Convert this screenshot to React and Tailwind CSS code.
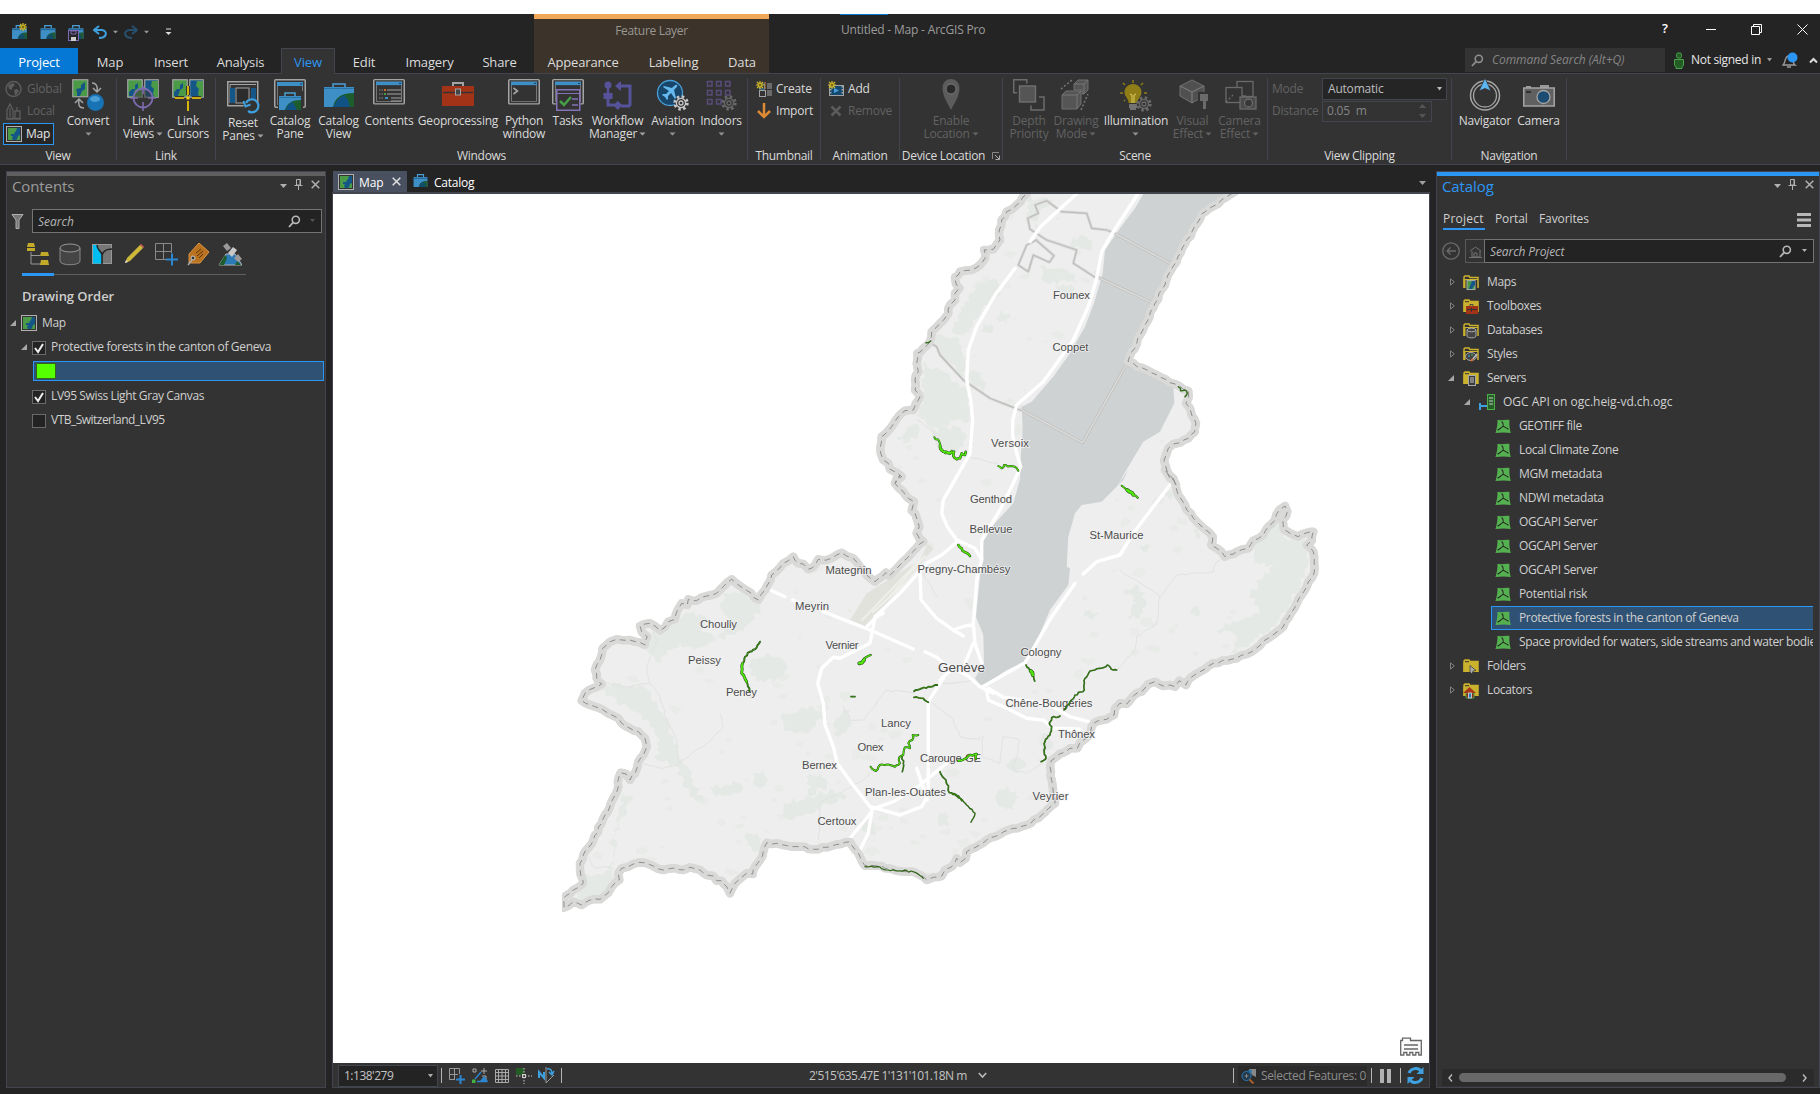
import React from "react";

/* ---------- shared pieces ---------- */

const I = ({ w = 16, h, vb, className = "", children }) => (
  <svg width={w} height={h || w} viewBox={vb || `0 0 ${w} ${h || w}`} fill="none" className={`shrink-0 ${className}`}>
    {children}
  </svg>
);

const Caret = ({ c = "#a0a0a0", className = "" }) => (
  <I w={7} h={4} className={className}><path d="M0 0h7L3.5 4z" fill={c} /></I>
);

const MapTile = ({ w = 16 }) => (
  <I w={w} vb="0 0 16 16">
    <rect x=".5" y=".5" width="15" height="15" fill="#333" stroke="#b0b0b0" />
    <rect x="2" y="2" width="12" height="12" fill="#4b9a48" />
    <path d="M11 2h3v7l-2 1-1 3-1 1H7l-1-2 1-2H5V8l3 0 1-2 1-1z" fill="#155688" />
  </I>
);

const Briefcase = ({ w = 16, h = 15 }) => (
  <I w={w} h={h} vb="0 0 16 15">
    <path d="M4.500 3.500V.7h7v2.800" stroke="#4a9fd8" strokeWidth="1.300" />
    <rect x="0" y="3.500" width="16" height="11.500" fill="#3d8fc6" />
    <path d="M6 15c1-5 4-7 10-7v7z" fill="#1f5a35" />
    <path d="M8 11l3-2 2 2 1 4H6z" fill="#0d4b7b" opacity=".8" />
    <path d="M0 5h16" stroke="#1f5f8f" />
  </I>
);

const Search = ({ c = "#b8b8b8" }) => (
  <I w={13}><circle cx="7.8" cy="4.8" r="3.6" stroke={c} strokeWidth="1.6" /><path d="M5 7.6L1 12" stroke={c} strokeWidth="1.8" /></I>
);

const Gear = ({ x, y, c, bg = "#333" }) => (
  <g transform={`translate(${x} ${y})`}>
    <circle r="6.2" stroke={c} strokeWidth="3" strokeDasharray="2.4 2.47" fill={bg} />
    <circle r="4.6" fill={bg} stroke={c} strokeWidth="1.3" />
    <circle r="2" stroke={c} strokeWidth="1.3" />
  </g>
);

const Spark = ({ x, y, c = "#d6bd2c" }) => (
  <g transform={`translate(${x} ${y})`} stroke={c}>
    <path d="M0-4V4M-4 0H4M-3-3L3 3M-3 3L3-3" strokeWidth="1.2" />
    <circle r="2" fill="#7a6b10" />
  </g>
);

/* ---------- quick access ---------- */

function QuickAccess() {
  return (
    <div className="flex h-[34px] items-center pl-[12px] pt-[2px]">
      <div className="relative">
        <Briefcase w={15} h={14} />
        <I w={10} className="absolute -top-[3px] left-[6px]"><Spark x={5} y={5} /></I>
      </div>
      <div className="ml-[13px]"><Briefcase w={16} h={14} /></div>
      <div className="relative ml-[12px]">
        <Briefcase w={16} h={14} />
        <I w={11} className="absolute left-0 top-[5px]">
          <rect x=".5" y=".5" width="10" height="10" fill="#252525" stroke="#7e6bb5" />
          <path d="M3 1h5v3H3z" stroke="#7e6bb5" /><path d="M3 7h5v4H3z" fill="#ccc" />
        </I>
      </div>
      <I w={14} h={14} className="ml-[9px]"><path d="M6 1L1 5l5 4M1 5h8c6 1 5 8-3 8" stroke="#3fa0e0" strokeWidth="2" /></I>
      <Caret className="ml-[5px] scale-75" c="#9a9a9a" />
      <I w={14} h={14} className="ml-[5px]"><path d="M8 1l5 4-5 4M13 5H5C-1 6 0 13 8 13" stroke="#27506e" strokeWidth="2" /></I>
      <Caret className="ml-[5px] scale-75" c="#9a9a9a" />
      <I w={7} h={8} className="ml-[15px]"><path d="M1 1h5" stroke="#ddd" /><path d="M.5 4h6L3.500 7z" fill="#ddd" /></I>
    </div>
  );
}

const Tab = ({ className = "", children }) => (
  <div className={`flex h-full items-center justify-center pt-[3px] text-[13px] tracking-[-0.15px] text-[#dcdcdc] ${className}`}>{children}</div>
);

function Header() {
  return (
    <header className="flex h-[60px] border-b border-[#43454e] bg-[#242424]">
      <div className="w-[534px]">
        <QuickAccess />
        <nav className="flex h-[26px]">
          <Tab className="w-[78px] bg-[#0478d4] !text-white">Project</Tab>
          <Tab className="w-[64px]">Map</Tab>
          <Tab className="w-[58px]">Insert</Tab>
          <Tab className="w-[81px]">Analysis</Tab>
          <Tab className="w-[54px] border border-b-0 border-[#43454e] bg-[#333] !text-[#2c96f5]">View</Tab>
          <Tab className="w-[58px]">Edit</Tab>
          <Tab className="w-[73px]">Imagery</Tab>
          <Tab className="w-[67px]">Share</Tab>
        </nav>
      </div>
      <div className="w-[235px] border-t-[5px] border-[#f0a757] bg-[#3c332a]">
        <div className="flex h-[29px] items-center justify-center pb-[5px] text-[12px] tracking-[-0.3px] text-[#9b9792]">Feature Layer</div>
        <div className="flex h-[25px] pt-px">
          <Tab className="w-[98px]">Appearance</Tab>
          <Tab className="w-[83px]">Labeling</Tab>
          <Tab className="w-[54px]">Data</Tab>
        </div>
      </div>
      <div className="flex-1">
        <div className="flex h-[34px] items-center">
          <div className="flex h-full w-[192px] flex-col pl-[72px]">
            <div className="-ml-px h-px w-[48px] bg-[#0478d4]" />
            <div className="mt-[6px] whitespace-nowrap text-[12px] leading-[18px] tracking-[-0.18px] text-[#9c9c9c]">Untitled - Map - ArcGIS Pro</div>
          </div>
          <div className="ml-auto flex items-center pb-[4px] pr-[12px] text-white">
            <span className="w-[14px] text-center text-[13px] font-semibold">?</span>
            <I w={10} className="ml-[34px]"><path d="M0 5.500h10" stroke="#fff" /></I>
            <I w={11} className="ml-[35px]"><path d="M.5 2.500h8v8h-8zM2.500 2.500v-2h8v8h-2" stroke="#fff" /></I>
            <I w={11} className="ml-[35px]"><path d="M.5.5l10 10M10.500.5l-10 10" stroke="#fff" /></I>
          </div>
        </div>
        <div className="flex h-[24px] items-center pl-[696px]">
          <div className="flex h-full w-[200px] items-center gap-[8px] bg-[#333] pl-[6px]">
            <Search c="#8f8f8f" />
            <span className="text-[12px] italic tracking-[-0.05px] text-[#858585]">Command Search (Alt+Q)</span>
          </div>
          <I w={10} h={17} className="ml-[9px]">
            <rect x="2.500" y="1" width="5" height="5" rx="1.500" fill="#235c24" stroke="#4aa34a" />
            <path d="M.5 7.500h9v6l-1.500 1v2H2v-2l-1.500-1z" fill="#235c24" stroke="#4aa34a" />
          </I>
          <span className="ml-[7px] w-[72px] whitespace-nowrap text-[12px] tracking-[-0.3px] text-[#e6e6e6]">Not signed in</span>
          <I w={5} h={4} className="ml-[4px]"><path d="M0 0h5L2.500 3.500z" fill="#999" /></I>
          <I w={16} h={17} className="ml-[10px]">
            <path d="M1 13c3-2 1-9 6-9s3 7 6 9z" stroke="#9a9a9a" strokeWidth="1.300" /><path d="M5 15h4" stroke="#9a9a9a" strokeWidth="1.500" />
            <circle cx="10.500" cy="5.500" r="5" fill="#2c96f5" />
          </I>
          <I w={9} h={7} className="ml-[11px]"><path d="M1 5.500L4.500 2 8 5.500" stroke="#ddd" strokeWidth="2" /></I>
        </div>
      </div>
    </header>
  );
}

/* ---------- ribbon ---------- */

const G = "#a4a4a4";
const D = "#5c5c5c";

const WindowFrame = () => (
  <>
    <rect x=".75" y=".75" width="30.500" height="27.500" stroke={G} strokeWidth="1.500" rx="1" />
    <rect x="3.500" y="3.500" width="25" height="22" stroke="#777" />
    <rect x="3" y="3" width="26" height="4" fill="#3d8fc6" /><path d="M26 5h2" stroke="#173d58" />
  </>
);

const TwoMaps = () => (
  <>
    <g><rect x=".75" y=".75" width="14.500" height="17.500" fill="#4b9a48" stroke={G} strokeWidth="1.200" /><path d="M2 17V13l3-3 3 0 0-4 3-2 0 5-3 2-2 6z" fill="#155688" /></g>
    <g><rect x="17.750" y=".75" width="13.500" height="17.500" fill="#155688" stroke={G} strokeWidth="1.200" /><path d="M25 2h6v16h-4l-1-4 1-4-3-3z" fill="#4b9a48" /></g>
  </>
);

const icons = {
  convert: (
    <>
      <rect x=".75" y=".75" width="15" height="17" fill="#4b9a48" stroke={G} strokeWidth="1.200" />
      <path d="M5 17V13l-1-3 5-1V6l4-3v7l-3 2-2 5z" fill="#155688" />
      <path d="M20 4c4 0 6 3 5 8M21 9l4 4 4-4" stroke={G} strokeWidth="1.500" />
      <path d="M12 29c-5 0-6-3-5-8M3 24l4-4 4 4" stroke={G} strokeWidth="1.500" />
      <circle cx="23.500" cy="23.500" r="8.500" fill="#1873b4" /><ellipse cx="23" cy="20" rx="5" ry="3" fill="#58a9de" opacity=".8" />
    </>
  ),
  linkViews: (
    <>
      <TwoMaps />
      <circle cx="16" cy="19" r="9.500" stroke="#7d6bb0" strokeWidth="1.800" fill="#333" fillOpacity=".55" />
      <path d="M16 7v8M16 23v9M3 19h8M21 19h8" stroke="#7d6bb0" strokeWidth="1.600" />
    </>
  ),
  linkCursors: (
    <>
      <TwoMaps />
      <path d="M16 7v9M16 22v10M3 19h9M20 19h9" stroke="#333" strokeWidth="4" />
      <path d="M16 7v9M16 22v10M3 19h9M20 19h9" stroke="#ffd500" strokeWidth="1.600" /><rect x="14.500" y="17.500" width="3" height="3" fill="#ffd500" />
    </>
  ),
  resetPanes: (
    <>
      <rect x=".75" y=".75" width="30" height="24" stroke={G} strokeWidth="1.500" />
      <path d="M3 3.500h26M3 3v19" stroke={G} />
      <rect x="3" y="7" width="5" height="15" fill="#155688" /><rect x="9" y="7" width="13" height="15" fill="#2c2c2c" stroke={G} />
      <rect x="24" y="7" width="5" height="12" fill="#155688" />
      <circle cx="24" cy="25" r="7.500" fill="#333" />
      <path d="M19 22a6.500 6.500 0 1 1 2 8" stroke="#3fa0e0" strokeWidth="2.200" /><path d="M16.500 20l2 5.500 5-2" stroke="#3fa0e0" strokeWidth="2" />
    </>
  ),
  catalogPane: (
    <>
      <WindowFrame />
      <rect x="4" y="12" width="25" height="20" fill="#333" />
      <path d="M11 17v-3h10v3" stroke="#4a9fd8" strokeWidth="1.500" />
      <rect x="5" y="17" width="22" height="14" fill="#3d8fc6" /><path d="M5 18.500h22" stroke="#2a74a5" />
      <path d="M11 31c2-7 7-10 16-10v10z" fill="#1d5c2c" /><path d="M15 25l4-2 2 4 2 4H11z" fill="#0f5283" />
    </>
  ),
  catalogView: (
    <>
      <path d="M10 8V5h12v3" stroke="#4a9fd8" strokeWidth="1.500" />
      <rect x="1" y="8" width="30" height="20" fill="#3d8fc6" /><path d="M1 9.500h30" stroke="#2a74a5" />
      <path d="M10 28c2-10 9-14 21-14v14z" fill="#1d5c2c" /><path d="M15 20l6-4 4 5 2 7H10z" fill="#0f5283" />
    </>
  ),
  contents: (
    <>
      <g transform="scale(1 .88)"><WindowFrame /></g>
      <path d="M14 11h14M14 15h14M18 19h10M18 22h10" stroke={G} />
      <path d="M6 11h4M6 15h4M6 19h4" stroke="#8a8a8a" strokeDasharray="1.500 1" />
      <path d="M11 11h2" stroke="#d46a2a" strokeWidth="2" /><path d="M11 15h2" stroke="#4b9a48" strokeWidth="2" /><path d="M12 19h3" stroke="#3d8fc6" strokeWidth="2" />
    </>
  ),
  geo: (
    <>
      <path d="M11 7V4h10v3" stroke={G} strokeWidth="2" /><rect x="0" y="7" width="32" height="20" fill="#a33316" />
      <path d="M1 13.500h30" stroke="#333" strokeWidth="1.500" /><rect x="13.500" y="10" width="5" height="6" fill="#444" stroke={G} />
    </>
  ),
  python: (<><g transform="scale(1 .88)"><WindowFrame /></g><path d="M5.500 9l4 3-4 3" stroke={G} strokeWidth="1.600" /></>),
  tasks: (
    <>
      <g transform="scale(1 .88)"><WindowFrame /></g>
      <rect x="4.750" y="10.750" width="23" height="20.500" fill="#333" stroke="#8572b8" strokeWidth="1.500" /><path d="M5 14.500h23" stroke="#8572b8" />
      <path d="M8 22l4 4 7-8" stroke="#45a045" strokeWidth="2.500" /><path d="M20 20h6M20 26h6" stroke="#8572b8" strokeWidth="1.500" />
    </>
  ),
  workflow: (
    <>
      <circle cx="6" cy="6" r="3.500" fill="#56539a" /><path d="M6 8v8" stroke="#56539a" strokeWidth="2.500" />
      <rect x="1.500" y="14" width="9" height="6" fill="#56539a" /><path d="M6 19v7h6M28 27V7h-9M19 27h9" stroke="#56539a" strokeWidth="3" />
      <path d="M19 2l-6 5 6 5zM11 26l5-4 4 4-4 5z" fill="#56539a" />
    </>
  ),
  aviation: (
    <>
      <circle cx="13" cy="14" r="12.500" fill="#17466a" stroke="#4a9fd8" strokeWidth="1.300" />
      <path d="M20 6c1 1-1 3-3 5l2 8-1 1-4-6-3 3v3l-1 1-2-3-3-2 1-1h3l3-3-6-4 1-1 8 2c2-2 4-4 5-3z" fill="#66b9ee" />
      <Gear x={24} y={24} c="#c6c6c6" />
    </>
  ),
  indoors: (
    <>
      {[3, 12, 21].map((x) => [2, 11, 20].map((y) => <rect key={`${x}${y}`} x={x - 0.5} y={y + 0.5} width="4.500" height="4.500" stroke="#5a4c7a" strokeWidth="1.500" />))}
      <Gear x={24} y={24} c="#686868" />
    </>
  ),
  location: (<><path d="M16 0c-5 0-8.500 4-8.500 9 0 8 5 15 8.500 22 3.500-7 8.500-14 8.500-22 0-5-3.500-9-8.500-9z" fill={D} /><circle cx="16" cy="10" r="5" fill="#2a2a2a" stroke="#777" /></>),
  depth: (
    <g stroke="#707070" strokeWidth="1.400">
      <rect x=".75" y=".75" width="13" height="13" /><rect x="18" y="18" width="13" height="13" />
      <rect x="5.500" y="6" width="19" height="19" fill="#333" stroke="#333" strokeWidth="3" /><rect x="6.500" y="7" width="16" height="16" fill="#555" />
    </g>
  ),
  drawing: (
    <>
      <path d="M2 16l4-4h15v13l-4 5H2z" fill="#555" stroke="#707070" /><path d="M2 16h15v14M17 16l4-4" stroke="#777" />
      <path d="M14 5l4-4h10v10l-4 4h-2V11h-8z" fill="#555" stroke="#707070" /><path d="M14 5h10v10M24 5l4-4" stroke="#777" />
      <path d="M1 10l11-9M21 31l7-16" stroke="#777" strokeDasharray="2 2" strokeWidth="1.500" />
    </>
  ),
  illum: (
    <>
      <path d="M13 1v3M3 4l2 2M23 4l-2 2M0 14h3M24 14h3M4 22l1-1" stroke="#8f7d18" strokeWidth="1.500" />
      <path d="M13 5c-5 0-8.500 4-8.500 8 0 5 4 6 4 11h9c0-5 4-6 4-11 0-4-3.500-8-8.500-8z" fill="#8f7d18" />
      <path d="M12 24v-8l-2-1M14 24v-8l2-1" stroke="#e0cf5a" /><path d="M9 26h8M9 28h8M10 30h6" stroke="#888" strokeWidth="1.300" />
      <Gear x={24} y={25} c="#6a6a6a" />
    </>
  ),
  visual: (
    <>
      <path d="M3 7l12-6 12 6v10l-12 7-12-7z" fill="#505050" stroke="#707070" /><path d="M3 7l12 6 12-6M15 13v11" stroke="#777" strokeWidth="1.300" />
      <rect x="21" y="13" width="11" height="18" fill="#333" /><path d="M23 15h8v7h-8zM26 22h3v8h-3z" fill="#6b6b6b" />
    </>
  ),
  camEffect: (
    <g stroke="#6b6b6b" strokeWidth="1.300">
      <rect x="13" y="2.500" width="16" height="15" /><rect x="2" y="8.500" width="16" height="15" fill="#333" /><path d="M2 23l7-7" strokeDasharray="2 2" />
      <rect x="16" y="18" width="16" height="12" fill="#4a4a4a" /><circle cx="24.500" cy="24" r="4" fill="#383838" /><path d="M18 17h4" />
    </g>
  ),
  navigator: (
    <>
      <circle cx="16" cy="16.500" r="14.500" stroke={G} strokeWidth="1.500" /><circle cx="16" cy="16.500" r="11.500" stroke={G} strokeWidth="1.300" />
      <path d="M16-1l6 13-6-2.500-6 2.500z" fill="#5cb4f0" stroke="#333" strokeWidth=".8" />
    </>
  ),
  camera: (
    <>
      <rect x="17" y="6" width="9" height="3" fill="#999" /><rect x="3" y="7" width="5" height="2" fill="#999" />
      <rect x=".75" y="9" width="30.500" height="18" fill="#606060" stroke={G} strokeWidth="1.500" />
      <path d="M3 13h5" stroke="#222" strokeWidth="1.500" /><circle cx="20.500" cy="18" r="6.500" fill="#1d4c72" stroke={G} strokeWidth="1.300" />
    </>
  ),
};

function Big({ icon, l1, l2, caret, off, className }) {
  const color = off ? "text-[#626262]" : "text-[#dadada]";
  return (
    <div className={`flex shrink-0 flex-col items-center ${className}`}>
      <I w={32} className="overflow-visible">{icons[icon]}</I>
      <div className={`mt-[3px] flex flex-col items-center whitespace-nowrap text-[12px] leading-[13px] tracking-[-0.2px] ${color}`}>
        <span>{l1}</span>
        {l2 && <span className="flex items-center gap-[2px]">{l2}{caret && <Caret c={off ? "#626262" : "#a0a0a0"} className="scale-90" />}</span>}
        {!l2 && caret && <Caret className="mt-[5px] scale-90" c="#909090" />}
      </div>
    </div>
  );
}

const Group = ({ title, className, children, extra }) => (
  <section className={`flex h-[82px] shrink-0 flex-col border-r border-[#43454e] ${className}`}>
    <div className="flex h-[71px] pt-px">{children}</div>
    <div className="flex h-[13px] translate-y-[2px] items-center justify-center gap-[7px] whitespace-nowrap text-[12px] leading-[13px] tracking-[-0.3px] text-[#dadada]">{title}{extra}</div>
  </section>
);

const Small = ({ icon, off, children }) => (
  <div className={`flex h-[22px] items-center gap-[4px] text-[12px] tracking-[-0.2px] ${off ? "text-[#626262]" : "text-[#dadada]"}`}>{icon}{children}</div>
);

function Ribbon() {
  return (
    <div className="flex h-[91px] border-b border-[#43454e] bg-[#333] pt-[4px]">
      <Group title="View" className="w-[117px]">
        <div className="-mt-px flex w-[61px] flex-col pl-[3px]">
          <Small off icon={<I w={18} className="ml-[2px]"><circle cx="8.500" cy="9" r="7.500" stroke={D} strokeWidth="1.500" /><path d="M3 5l5-2 2 2-3 3v2l-3-1zM9 10l3-1 2 2-3 4h-1z" fill={D} /></I>}>Global</Small>
          <Small off icon={<I w={18} className="ml-[2px]"><path d="M2 17V8l3-6 3 6v9zM5 6v9M10 9h5v8h-5zM12 5v4M1 16.500h15" stroke={D} strokeWidth="1.300" /></I>}>Local</Small>
          <div className="mt-px flex h-[22px] w-[51px] items-center gap-[4px] border border-[#2c96f5] bg-[#262626] pl-[2px] text-[12px] tracking-[-0.2px] text-[#e6e6e6]"><MapTile />Map</div>
        </div>
        <Big icon="convert" l1="Convert" caret className="w-[54px]" />
      </Group>
      <Group title="Link" className="w-[99px]">
        <Big icon="linkViews" l1="Link" l2="Views" caret className="ml-[3px] w-[46px]" />
        <Big icon="linkCursors" l1="Link" l2="Cursors" className="w-[44px]" />
      </Group>
      <Group title="Windows" className="w-[532px]">
        <Big icon="resetPanes" l1="Reset" l2="Panes" caret className="ml-[2px] w-[50px] pt-[2px]" />
        <Big icon="catalogPane" l1="Catalog" l2="Pane" className="w-[44px]" />
        <Big icon="catalogView" l1="Catalog" l2="View" className="w-[53px]" />
        <Big icon="contents" l1="Contents" className="w-[48px]" />
        <Big icon="geo" l1="Geoprocessing" className="w-[90px]" />
        <Big icon="python" l1="Python" l2="window" className="w-[42px]" />
        <Big icon="tasks" l1="Tasks" className="w-[45px]" />
        <Big icon="workflow" l1="Workflow" l2="Manager" caret className="w-[55px]" />
        <Big icon="aviation" l1="Aviation" caret className="w-[56px]" />
        <Big icon="indoors" l1="Indoors" caret className="w-[40px]" />
      </Group>
      <Group title="Thumbnail" className="w-[73px]">
        <div className="-mt-px flex flex-col pl-[8px]">
          <Small icon={<I w={16}><rect x="3.500" y="3" width="5" height="5" stroke="#3d8fc6" /><rect x="3.500" y="9.500" width="6" height="6" stroke={G} /><path d="M11 3h5M11 5h5M11 7h5M11 10h5M11 12h5M11 14h5" stroke={G} /><path d="M9 1v7" stroke="#e0832a" /><Spark x={4} y={4} /></I>}>Create</Small>
          <Small icon={<I w={16}><path d="M8 0v13M2 8l6 6 6-6" stroke="#dc8a33" strokeWidth="2.500" /></I>}>Import</Small>
        </div>
      </Group>
      <Group title="Animation" className="w-[79px]">
        <div className="-mt-px flex flex-col pl-[7px]">
          <Small icon={<I w={16}><rect x="1.500" y="4.500" width="14" height="10" fill="#14486e" stroke={G} /><path d="M2.500 5v9M14.500 5v9" stroke={G} strokeWidth="2" strokeDasharray="1.500 1.500" /><path d="M6 7l5 2.500L6 12z" fill="#4a9fd8" /><Spark x={4} y={4} /></I>}>Add</Small>
          <Small off icon={<I w={16}><path d="M3.500 3.500l9 9M12.500 3.500l-9 9" stroke={D} strokeWidth="2.500" /></I>}>Remove</Small>
        </div>
      </Group>
      <Group title="Device Location" className="w-[103px]" extra={<I w={8}><path d="M.5 7V.5H7" stroke="#888" /><path d="M3 3l4 4M7.500 3.500v4h-4" stroke="#aaa" /></I>}>
        <Big off icon="location" l1="Enable" l2="Location" caret className="w-[102px]" />
      </Group>
      <Group title="Scene" className="w-[265px]">
        <Big off icon="depth" l1="Depth" l2="Priority" className="ml-px w-[50px]" />
        <Big off icon="drawing" l1="Drawing" l2="Mode" caret className="w-[44px]" />
        <Big icon="illum" l1="Illumination" caret className="w-[76px]" />
        <Big off icon="visual" l1="Visual" l2="Effect" caret className="w-[37px]" />
        <Big off icon="camEffect" l1="Camera" l2="Effect" caret className="w-[57px]" />
      </Group>
      <Group title="View Clipping" className="w-[184px]">
        <div className="flex flex-col pl-[4px] text-[12px] tracking-[-0.2px] text-[#626262]">
          <div className="-mt-[2px] flex h-[23px] items-center"><span className="w-[50px]">Mode</span>
            <div className="flex h-[22px] w-[125px] items-center justify-between border border-[#43454e] bg-[#252525] pl-[5px] pr-[4px] text-[#bdbdbd]">Automatic<I w={5} h={4}><path d="M0 0h5L2.500 3.500z" fill="#bbb" /></I></div>
          </div>
          <div className="flex h-[22px] items-center"><span className="w-[50px]">Distance</span>
            <div className="flex h-[21px] w-[110px] items-center justify-between border border-[#43454e] pl-[4px] pr-[5px] text-[#858585]"><span className="whitespace-pre">0.05  m</span>
              <I w={7} h={14}><path d="M0 4h7L3.500 0zM0 10h7L3.500 14z" fill="#555" /></I></div>
          </div>
        </div>
      </Group>
      <Group title="Navigation" className="w-[115px]">
        <Big icon="navigator" l1="Navigator" className="ml-[4px] w-[58px]" />
        <Big icon="camera" l1="Camera" className="w-[49px]" />
      </Group>
    </div>
  );
}

/* ---------- docked panes ---------- */

const PaneButtons = () => (
  <div className="flex items-center gap-[7px]">
    <Caret c="#b0b0b0" className="mt-[3px]" />
    <I w={9} h={11}><path d="M2.500 0.500h4v5.500h-4zM.5 6.500h8M4.500 7v4" stroke="#b0b0b0" /><path d="M6 1v5" stroke="#b0b0b0" /></I>
    <I w={9} className="ml-px"><path d="M.7.7l7.600 7.600M8.300.7L.7 8.300" stroke="#b0b0b0" strokeWidth="1.500" /></I>
  </div>
);

const Open = () => <I w={6} h={6}><path d="M6 0v6H0z" fill="#a8a8a8" /></I>;
const Closed = () => <I w={5} h={8}><path d="M.5.8v6.400L4.300 4z" stroke="#808080" /></I>;

const Check = ({ on }) => (
  <I w={14}><rect x=".5" y=".5" width="13" height="13" fill="#232323" stroke="#6a6a6a" />{on && <path d="M3 7l3 4 5-8" stroke="#f0f0f0" strokeWidth="2" />}</I>
);

function Contents() {
  return (
    <aside className="flex w-[320px] shrink-0 flex-col border border-[#43454e] bg-[#333]">
      <div className="h-[4px] bg-[#5f5f5f]" />
      <div className="flex h-[22px] items-center justify-between pl-[5px] pr-[5px]">
        <span className="-mt-[2px] text-[15px] tracking-[-0.1px] text-[#9b9b9b]">Contents</span><div className="-mt-[6px]"><PaneButtons /></div>
      </div>
      <div className="mt-[11px] flex h-[24px] items-center pl-[4px]">
        <I w={13} h={16}><path d="M1 1.500h11L8 7v8.500H5V7z" fill="#777" stroke="#b0b0b0" /></I>
        <div className="ml-[8px] flex h-[24px] w-[290px] items-center border border-[#747474] bg-[#232323] px-[5px]">
          <span className="flex-1 pt-px text-[12px] italic text-[#b5b5b5]">Search</span><Search /><I w={5} h={4} className="ml-[9px] mr-[1px]"><path d="M0 0h5L2.500 3z" fill="#555" /></I>
        </div>
      </div>
      <div className="ml-[15px] mt-[8px] flex h-[34px] w-[224px] items-start justify-around border-b border-[#5f5f5f] pt-[2px]">
        <I w={24}><path d="M5 9v12h12M5 12.500h9" stroke="#999" /><path d="M2 0h6l1 4H1zM1 5h8v3H1zM15 9h7l1 4h-9zM15 17h7l1 5h-9z" fill="#c3aa28" /></I>
        <I w={24}><path d="M2 5v13c0 5 20 5 20 0V5" fill="#454545" stroke="#888" /><ellipse cx="12" cy="5" rx="10" ry="4" fill="#3a3a3a" stroke="#999" /></I>
        <I w={24}><rect x="2.500" y="1.500" width="19" height="19" fill="#777" stroke="#999" /><path d="M3 2h4l5 10v8.500H3z" fill="#00bdf2" /><path d="M7 2c0 6 5 6 5 10v9M12 12c2-5 5-6 10-6" stroke="#222" strokeWidth="1.500" /></I>
        <I w={24}><path d="M3 20l2-5L18 2l3 3L8 18z" fill="#cdb93a" /><path d="M18 2l1-1 3 3-1 1z" fill="#e0665a" /><path d="M3 20l1-3 2 2z" fill="#ddd" /></I>
        <I w={24}><path d="M1.500.5h16v16h-16zM9.500.5v16M1.500 8.500h16" stroke="#8a8a8a" /><path d="M12 16.500h12M18 10v13" stroke="#333" strokeWidth="5" /><path d="M12 16.500h12M18 10.500v12" stroke="#2c87d0" strokeWidth="2" /></I>
        <I w={24}><path d="M13 0l10 9-9 11H3V11z" fill="#b9721f" stroke="#dc9347" /><path d="M10 10l5-4M11 13l6-5M13 15l4-4" stroke="#5a3208" /><circle cx="7" cy="15" r="2" fill="#333" stroke="#ccc" /><path d="M6 17l-4 5" stroke="#aaa" strokeWidth="1.500" /></I>
        <I w={24}><path d="M1 22L8 11h9l7 11z" fill="#2b79b5" stroke="#b5b5b5" /><path d="M1 22l6-10 2 3-3 7zM17 22l2-4 4 4z" fill="#1d5c2c" /><path d="M5 3l4-3 4 5-4 3zM16 15l4-4 4 5-4 3z" fill="#9a9a9a" /><path d="M10 10l5-6 4 3-5 7z" fill="#c8c8c8" /></I>
      </div>
      <div className="-mt-[2px] ml-[15px] h-[3px] w-[32px] bg-[#2c96f5]" />
      <div className="ml-[15px] mt-[10px] text-[13px] font-semibold leading-[20px] tracking-[-0.05px] text-[#cfcfcf]">Drawing Order</div>
      <div className="text-[12px] tracking-[-0.34px] text-[#d0d0d0]">
        <div className="mt-[5px] flex h-[24px] items-center pl-[3px]"><Open /><span className="ml-[5px]"><MapTile /></span><span className="ml-[5px]">Map</span></div>
        <div className="flex h-[24px] items-center pl-[14px]"><Open /><span className="ml-[5px] mt-[2px]"><Check on /></span><span className="ml-[5px]">Protective forests in the canton of Geneva</span></div>
        <div className="ml-[26px] mt-[2px] flex h-[20px] w-[291px] items-center border border-[#2c96f5] bg-[#2f5173] pl-[2px]"><span className="h-[16px] w-[20px] border border-[#33661a] bg-[#55ff00]" /></div>
        <div className="mt-[3px] flex h-[24px] items-center pl-[25px]"><span className="mt-[2px]"><Check on /></span><span className="ml-[5px] tracking-[-0.38px]">LV95 Swiss Light Gray Canvas</span></div>
        <div className="flex h-[24px] items-center pl-[25px]"><span className="mt-[2px]"><Check /></span><span className="ml-[5px] tracking-[-0.52px]">VTB_Switzerland_LV95</span></div>
      </div>
    </aside>
  );
}

/* ---------- catalog ---------- */

const Folder = ({ solid, children }) => (
  <I w={16} h={16} className="overflow-visible">
    <path d="M1 14V3l1-1h4l1 1.500h8V14" stroke="#cbb22e" strokeWidth="1.500" fill={solid ? "#cbb22e" : "#333"} /><path d="M1 5.500h14" stroke="#cbb22e" />
    <path d="M1.500 5v9" stroke="#cbb22e" strokeWidth="2" />
    <path d="M2 3.700h4" stroke="#333" />
    {children}
  </I>
);

const folderIcons = {
  maps: <Folder><rect x="4" y="6.500" width="8" height="9" fill="#4b9a48" stroke="#aaa" /><path d="M9 7h3v4l-2 2-1 2H6l1-3z" fill="#155688" /></Folder>,
  toolboxes: <Folder solid><rect x="3" y="8" width="12" height="8" fill="#a33316" /><path d="M7 8V6.500h3V8" stroke="#444" /><path d="M4 11.500h10" stroke="#333" /><path d="M8.500 10v4" stroke="#333" /></Folder>,
  databases: <Folder><path d="M4 8v6c0 2.500 9 2.500 9 0V8" fill="#444" stroke="#aaa" /><ellipse cx="8.500" cy="8" rx="4.500" ry="1.800" fill="#444" stroke="#aaa" /></Folder>,
  styles: <Folder><ellipse cx="8" cy="10.500" rx="5.500" ry="4" fill="#444" stroke="#aaa" /><circle cx="6" cy="10" r="1" fill="#3d8fc6" /><circle cx="9" cy="9" r="1" fill="#4b9a48" /><path d="M9 14l5-6" stroke="#bbb" strokeWidth="1.500" /><path d="M8 15l2-2" stroke="#d46a2a" strokeWidth="1.800" /></Folder>,
  servers: <Folder solid><rect x="5.500" y="5.500" width="7" height="10" fill="#3a3a3a" stroke="#aaa" /><path d="M7 8h4M7 10h4M7 12h4" stroke="#ccc" /></Folder>,
  folders: <Folder solid><path d="M7 7.500l6 5-3 .5-1 3-2-2z" fill="#aaa" stroke="#333" strokeWidth=".7" /></Folder>,
  locators: <Folder solid><path d="M3 11v5h8v-5z" fill="#8e2a12" stroke="#4b9a48" /><path d="M0 11l6.500-6L13 11z" fill="#a8371a" /><rect x="5.500" y="11" width="3" height="5" fill="#2b79b5" stroke="#ddd" strokeWidth=".8" /></Folder>,
};

const Quilt = () => (
  <I w={16} h={15}>
    <path d="M2.500.8c4 1 8-.6 12 .2-.6 4 .2 8 1.200 13-5-.8-10-.6-15.200 0C2 9 2.600 5 2.500.8z" fill="#55b04f" />
    <path d="M6.800 2.500c1.800 1.800 1.700 3.500 1.500 4.800-2 1-3.800 2.700-5.800 4M8.300 7.300c2 1 3.500 1.900 5.200 3" stroke="#262f26" strokeWidth="1.200" />
  </I>
);

const layers = ["GEOTIFF file", "Local Climate Zone", "MGM metadata", "NDWI metadata", "OGCAPI Server", "OGCAPI Server", "OGCAPI Server", "Potential risk", "Protective forests in the canton of Geneva", "Space provided for waters, side streams and water bodies"];

const Branch = ({ icon, open, children }) => (
  <div className="flex h-[24px] items-center pl-[12px]"><span className={`flex w-[13px] ${open ? "-ml-[2px] mr-[2px]" : ""}`}>{open ? <Open /> : <Closed />}</span>{folderIcons[icon]}<span className="ml-[8px]">{children}</span></div>
);

function Catalog() {
  return (
    <aside className="flex w-[384px] shrink-0 flex-col overflow-hidden border border-[#43454e] bg-[#333]">
      <div className="h-[4px] bg-[#2c96f5]" />
      <div className="flex h-[22px] items-center justify-between pl-[5px] pr-[5px]">
        <span className="-mt-[2px] text-[15px] tracking-[-0.1px] text-[#2c96f5]">Catalog</span><div className="-mt-[6px]"><PaneButtons /></div>
      </div>
      <div className="mt-[11px] flex h-[22px] items-start pl-[6px] pr-[8px] text-[12px] leading-[18px] tracking-[-0.1px] text-[#d0d0d0]">
        <span className="h-[21px] w-[42px] whitespace-nowrap border-b-2 border-[#2c96f5] pt-px tracking-[0.25px]">Project</span><span className="ml-[10px] w-[44px] pt-px">Portal</span><span className="pt-px">Favorites</span>
        <I w={14} h={14} className="ml-auto mt-[4px]"><path d="M0 1.500h14M0 7h14M0 12.500h14" stroke="#b8b8b8" strokeWidth="3" /></I>
      </div>
      <div className="mt-[8px] flex h-[24px] items-center pl-[5px]">
        <I w={18}><circle cx="9" cy="9" r="8.200" stroke="#6b6b6b" strokeWidth="1.300" /><path d="M14 9H5M8.500 5.500L5 9l3.500 3.500" stroke="#6b6b6b" strokeWidth="1.300" /></I>
        <div className="ml-[5px] flex h-[24px] w-[19px] items-center justify-center border border-r-0 border-[#5a5a5a]"><I w={13}><path d="M1 6l5.500-4L12 6M3 6v6h8V6M5 12V8h3v4M0 12.500h13" stroke="#727272" /></I></div>
        <div className="flex h-[24px] w-[330px] items-center border border-[#747474] bg-[#232323] pl-[5px] pr-[6px]">
          <span className="flex-1 pt-px text-[12px] italic tracking-[-0.1px] text-[#b5b5b5]">Search Project</span><Search /><I w={5} h={4} className="ml-[10px]"><path d="M0 0h5L2.500 3z" fill="#b0b0b0" /></I>
        </div>
      </div>
      <div className="mt-[7px] w-[376px] overflow-hidden whitespace-nowrap pl-[1px] text-[12px] tracking-[-0.35px] text-[#d0d0d0]">
        <Branch icon="maps">Maps</Branch>
        <Branch icon="toolboxes">Toolboxes</Branch>
        <Branch icon="databases">Databases</Branch>
        <Branch icon="styles">Styles</Branch>
        <Branch icon="servers" open>Servers</Branch>
        <div className="flex h-[24px] items-center pl-[26px]"><Open /><I w={16} className="ml-[9px]"><path d="M1 9v7M1 12h8" stroke="#3fa0e0" strokeWidth="2" /><rect x="8.500" y=".5" width="7" height="15" fill="#245f26" stroke="#4fae4c" /><path d="M10 4h4M10 7h4M10 10h4" stroke="#ccc" /></I><span className="ml-[8px] tracking-[-0.02px]">OGC API on ogc.heig-vd.ch.ogc</span></div>
        {layers.map((l, i) => (
          <div key={i} className={`ml-[53px] flex h-[24px] items-center border pl-[3px] ${i === 8 ? "border-r-0 border-[#2c96f5] bg-[#2f5173]" : "border-transparent"}`}><Quilt /><span className={i === 9 ? "ml-[8px] tracking-[-0.38px]" : "ml-[8px]"}>{l}</span></div>
        ))}
        <Branch icon="folders">Folders</Branch>
        <Branch icon="locators">Locators</Branch>
      </div>
      <div className="mb-[1px] ml-[5px] mr-[5px] mt-auto flex h-[17px] items-center bg-[#2b2b2b] px-[6px]">
        <I w={5} h={8}><path d="M4 .5L1 4l3 3.500" stroke="#bbb" strokeWidth="1.400" /></I>
        <div className="ml-[6px] h-[9px] w-[327px] rounded-full bg-[#686868]" />
        <I w={5} h={8} className="ml-auto mr-[1px]"><path d="M1 .5L4 4 1 7.500" stroke="#bbb" strokeWidth="1.400" /></I>
      </div>
    </aside>
  );
}

/* ---------- map drawing ---------- */

/* Each survey sheet keeps coordinates in thirds of a pixel from its own corner. */
const sheet = (ox, oy) => (s) => s.trim().split(/\s+/).map((p) => { const [x, y] = p.split(",").map(Number); return `${(ox + x / 3).toFixed(1)},${(oy + y / 3).toFixed(1)}`; }).join(" ");
const N = sheet(840, 190);
const E = sheet(840, 470);
const S = sheet(800, 640);
const W = sheet(550, 540);

/* Repeatable noise in -1..1. */
const noise = (n) => { const v = Math.sin(n * 127.1) * 43758.5453; return 2 * (v - Math.floor(v)) - 1; };

/* Breaks every edge into short steps and pushes the new points sideways. */
const rough = (s, step, amp, closed) => {
  const p = s.split(" ").map((q) => q.split(",").map(Number));
  const out = [];
  const last = closed ? p.length : p.length - 1;
  for (let i = 0; i < last; i++) {
    const [ax, ay] = p[i];
    const [bx, by] = p[(i + 1) % p.length];
    const len = Math.hypot(bx - ax, by - ay) || 1;
    const n = Math.max(1, Math.round(len / step));
    out.push(`${ax},${ay}`);
    for (let k = 1; k < n; k++) {
      const t = k / n;
      const d = noise(ax + i * 3.7 + k * 11.3) * amp;
      out.push(`${(ax + (bx - ax) * t - ((by - ay) / len) * d).toFixed(1)},${(ay + (by - ay) * t + ((bx - ax) / len) * d).toFixed(1)}`);
    }
  }
  if (!closed) out.push(p[p.length - 1].join(","));
  return out.join(" ");
};

const border = [
  N("560,-30 1220,-20 1170,14 1085,72 1000,228 945,340 864,514 935,548 1005,582 1018,588 1030,598 1045,603 1046,622 1038,640 1050,655 1055,675 1068,700 1064,725 1045,745 1020,758 1000,762 985,775 978,795 972,812 980,840 995,862 1008,885"),
  E("975,0 1000,25 1010,60 1040,120 1080,165 1118,200 1114,225 1130,235 1155,260 1190,245 1225,235 1240,212 1270,195 1285,170 1305,150 1318,120 1335,108 1342,125 1328,150 1330,178 1350,190 1375,200 1395,190 1420,185 1415,212 1400,225 1420,245 1422,310 1400,350 1370,400 1330,470 1285,505 1235,545 1190,565 1120,580 1080,605 1050,625 1038,645 1018,632 1005,650 990,645 970,648 945,635 925,642 905,665 880,678 860,702 840,700 825,715 822,735 800,748 775,752 755,768 752,785 738,805 720,818 712,835 690,835 670,848 650,860 634,872 630,890 635,930 640,975"),
  S("765,490 725,525 680,555 625,570 560,600 500,635 497,655 480,668 470,655 455,680 435,690 425,708 400,712 380,720 360,705 340,695 290,692 255,685 245,678 195,677 150,605 95,618 40,628 0,620"),
  W("725,920 650,908 640,935 630,960 615,980 608,1002 590,1000 575,1012 555,1030 540,1060 530,1040 515,1022 500,1022 490,1008 470,1005 450,990 420,982 400,990 375,984 340,990 310,978 285,968 250,972 215,985 205,1000 208,1020 185,1040 175,1058 150,1078 120,1080 95,1095 70,1085 42,1103 40,1075 70,1050 100,1030 92,1005 90,970 100,945 130,900 165,825 190,775 205,740 207,710 212,698 228,702 240,720 255,700 265,665 280,645 290,620 285,595 265,575 240,565 215,550 205,535 160,510 95,482 105,460 155,432 140,415 135,390 150,360 158,325 180,305 200,298 240,300 285,315 292,290 275,275 270,258 285,252 300,250 315,258 330,272 345,262 355,245 375,238 382,212 395,190 412,195 415,178 440,182 470,168 500,160 520,140 545,118 580,145 625,180 645,150 665,105 700,70 730,50 745,70 760,72 775,88 795,75 805,58 830,60 860,45 875,38 890,48 910,55 930,80 950,105 975,125 995,110 1008,98 1018,108 1050,75 1080,45"),
  E("250,215 238,205 230,190 238,170 232,150 225,130 215,122 222,95 205,85 190,65 165,40 175,28 180,15"),
  N("165,880 185,860 170,848 150,838 145,820 130,810 122,790 125,740 155,710 175,680 195,662 220,660 228,640 240,620 225,600 225,570 235,545 230,520 232,490 250,475 270,455 275,425 300,400 325,370 330,345 345,330 345,310 358,295 348,282 345,262 360,245 395,240 420,225 435,205 432,180 460,178 480,150 478,120 485,90 500,65 530,45 560,12"),
].join(" ");

const lake = [
  N("910,12 885,55 840,115 795,180 788,250 762,340 735,410 690,490 640,560 610,595 575,635 545,650 548,720 542,800 540,890"),
  E("548,0 520,100 460,165 430,215 422,300 412,400 408,440 430,495 432,580 405,625 425,650 500,600 555,575 600,490 630,420 685,345 690,295 680,290 685,200 695,165 705,130 725,105 785,95 850,30 865,0"),
  N("830,890 865,830 910,755 960,725 1003,640 1000,588 864,514 945,340 1000,228 1085,72 1180,12"),
].join(" ");

const highways = [
  N("712,10 640,75 600,112 570,155"),
  `${N("525,235 510,255 465,315 410,410 385,480 380,570 392,630 398,690 390,790 330,895")} ${E("310,90 305,130 322,170 350,210 405,235 425,270 410,330 405,400 400,460 405,520 425,580")}`,
  `${N("895,10 820,125 785,185 770,265 745,350 700,450 650,520 610,575 530,645 518,690 518,740 530,790 542,830 515,890")} ${E("480,120 425,210 425,270")}`,
  `${E("355,212 305,255 260,280 180,370 105,440 90,520 0,565")} ${W("850,352 815,385 803,430 820,490 825,555 850,620 862,670 905,730 960,800 1050,825 1115,800 1135,765 1135,485 1180,415")}`,
  W("665,152 705,170"), W("728,180 745,188"), W("820,215 960,270 1090,327"), W("1125,335 1160,352 1180,370 1255,408 1290,440 1330,460"),
  W("965,808 1030,785 1110,735 1190,670"), W("965,815 955,880 930,930"), W("965,815 900,895"),
  E("240,310 243,390 290,445 340,480 370,498"), E("340,480 375,468 400,465"), E("400,520 375,580"), E("300,632 310,620 345,590"),
  E("425,652 555,578 595,510 635,440 705,340"), E("730,312 770,275 840,255 880,190 940,110 992,42"),
  E("445,655 490,682 580,695 640,710 690,740 745,755"), E("440,665 445,690 500,715 560,745 610,750 640,775 720,778"),
  E("230,895 245,940 262,990"), E("80,470 110,440 130,430"),
];

const woods = [
  N("440,270 490,280 470,320 400,390 390,430 340,430 350,380 390,310"), N("300,430 350,440 370,500 375,560 330,520 280,460"),
  N("245,520 300,540 380,600 390,690 340,690 300,720 235,680 250,620"), N("600,230 700,250 715,275 620,280"), N("400,540 440,580 430,610 390,570"),
  N("560,20 640,30 600,60 590,120 565,90"), N("700,140 760,150 755,180 700,175"), N("270,720 350,710 380,740 350,790 290,770"), N("480,360 510,370 500,400 470,390"), N("430,400 460,405 455,430 425,425"),
  N("170,740 230,700 235,740 190,760"), N("650,285 700,290 710,315 660,310"),
  E("1240,190 1310,160 1330,200 1400,210 1405,290 1380,350 1310,460 1230,520 1170,560 1190,500 1130,480 1200,450 1260,430 1230,370 1270,320 1300,290 1240,280"),
  E("850,360 900,350 920,400 900,445 860,440 890,400"), E("590,800 620,790 640,830 610,850"), E("960,50 1000,60 990,90"), E("740,420 780,430 760,450 730,440"),
  E("1060,410 1090,420 1080,435 1050,430"), E("500,400 540,390 560,415 520,425"), E("1060,180 1090,190 1080,210"), E("900,225 930,230 920,245 890,240"),
  W("520,160 580,150 630,200 600,250 560,280 500,300 540,240 510,200"), W("600,360 660,345 710,375 690,410 640,430 600,400"), W("310,270 420,220 470,230 450,270 500,300 430,330 390,310 350,330 330,370 290,330"),
  W("150,440 200,430 280,440 340,520 370,600 400,660 430,720 460,790 420,770 380,680 320,660 330,600 270,520 200,490"), W("690,530 790,500 830,530 760,580 700,570"), W("700,790 780,770 850,750 890,770 800,810 730,840 700,820"),
  W("590,880 640,890 630,930 590,920"), W("100,1010 190,985 200,1020 150,1070 90,1090 80,1060"), W("610,700 640,690 660,720 620,740"), W("850,530 900,510 900,560 860,590"), W("180,1000 220,760 250,780 200,850"), W("480,740 560,730 580,750 500,770"),
  S("590,460 620,440 660,470 640,510 600,500"), S("420,520 440,510 445,560 420,560"), S("610,370 650,350 680,370 650,400"), S("20,410 60,400 80,440 30,470"), S("180,540 215,530 230,580 200,590"),
];

/* Small copses scattered over the countryside. */
const copses = Array.from({ length: 420 }, (_, i) => {
  const x = 940 + noise(i + 1) * 380;
  const y = 550 + noise(i * 1.7 + 40) * 340;
  const r = 1.5 + Math.abs(noise(i * 2.3 + 9)) * 3.5;
  const a = noise(i * 3.1) * 3;
  return [0, 1, 2, 3, 4].map((k) => {
    const q = r * (0.5 + Math.abs(noise(i * 5 + k)));
    return `${(x + Math.cos(a + k * 1.256) * q * 1.5).toFixed(1)},${(y + Math.sin(a + k * 1.256) * q).toFixed(1)}`;
  }).join(" ");
});

const streams = [
  W("160,430 230,440 300,430 330,470 350,540 380,600 385,670 470,610 520,560 510,520"), W("280,670 340,685 385,675"), W("300,260 320,300 290,380 300,430"),
  W("880,500 900,540 940,540 1010,450 1090,460"), W("1150,490 1210,540 1230,590 1290,600"), W("1000,660 940,720 810,790 805,900"), W("110,940 130,980 190,985"),
  E("830,600 885,540 890,500 950,460 960,380 1010,315 1120,305 1130,275 1160,260"), E("960,380 840,300"), E("430,800 425,860 480,880 490,800 540,810 520,900 560,910 610,880"), E("300,640 390,632"),
  N("230,690 280,720 300,760"), N("380,800 470,820"), E("250,310 290,380"),
];

const cantonLines = [
  N("270,458 290,470 300,495 370,570 450,625 545,662"), N("820,128 800,120 755,115 740,70 665,65 620,32 585,45 595,70 563,85 570,118 620,150 665,165 710,180 700,220 765,262"),
  N("590,150 560,165 535,225 565,245 580,195 628,217 642,197 588,150"),
];
const lakeLines = [N("820,128 1000,225"), N("770,260 945,342"), N("545,660 728,758 864,514")];

const forests = [
  [N("283,742 298,755 302,775 310,785 330,792 335,782"), 1.2], [N("300,765 305,782 330,788 342,785 340,798 350,808 360,805 365,790 375,795 377,785"), 1.8],
  [N("475,828 485,835 492,825 510,828 525,830 535,842"), 1.2], [N("258,458 272,453"), 0.6], [N("1015,590 1022,602 1035,600 1042,610 1035,620"), 0.6],
  [E("845,47 855,55 868,62"), 1.2], [E("862,60 876,68 880,74"), 3], [E("880,74 888,78 893,83"), 1.4], [E("355,225 365,235 372,245 382,250 390,258"), 1.8],
  [E("92,555 78,562 72,570"), 1.4], [E("72,570 66,578 58,580"), 3], [E("558,585 566,595 572,603"), 1], [E("572,603 578,615"), 3], [E("578,615 584,633"), 1],
  [E("222,664 245,655 292,645"), 1], [E("222,682 250,685 265,697"), 1], [E("33,680 45,680"), 0.9],
  [E("830,600 820,600 802,585 785,595 750,603 735,625 733,660 705,675 690,695 672,720"), 0.8],
  [E("660,738 635,743 628,760 635,770 630,795 615,815 612,840 618,865 603,875"), 0.9],
  [E("235,795 218,795 217,810 205,820 210,835 195,832 190,855 178,862 180,880 165,890 150,885 120,885 108,903 92,890"), 1.2], [E("187,860 190,880 187,905"), 0.8],
  [E("355,872 372,868 385,858 410,852 408,866"), 1.6], [E("300,905 318,930 325,955 328,968 350,978 365,992"), 0.9],
  [S("455,460 470,465 500,495 525,520 520,535 513,547"), 0.6], [S("195,680 235,680 250,688 265,690 340,695 370,715"), 0.4],
  [W("630,305 615,328 600,335 585,350 578,370"), 1.1], [W("578,370 575,400 590,425"), 2.1], [W("590,425 598,453"), 1.1],
].map(([p, w]) => [rough(p, 2.2, 0.9, false), w]);

const coast = rough(border, 5, 1, true);
const woodland = woods.map((p) => rough(p, 3.5, 3.2, true));

const places = [
  [1071.500, 299, "Founex", 37], [1070.500, 351, "Coppet", 36], [1010, 447, "Versoix", 38], [991, 503, "Genthod", 42], [991, 533, "Bellevue", 43], [1116.500, 539, "St-Maurice", 54],
  [964, 572.500, "Pregny-Chambésy", 93], [848.500, 574, "Mategnin", 46], [812, 610, "Meyrin", 34], [718.500, 628, "Choully", 37], [704.500, 663.500, "Peissy", 33], [741.500, 696, "Peney", 31], [842, 649, "Vernier", 33],
  [1041, 655.500, "Cologny", 41], [1049, 707, "Chêne-Bougeries", 87], [1076.500, 737.500, "Thônex", 37], [896, 727, "Lancy", 30], [870.500, 750.500, "Onex", 26], [950.500, 762, "Carouge-GE", 61],
  [819.500, 769, "Bernex", 35], [905.500, 796, "Plan-les-Ouates", 81], [1050.500, 799.500, "Veyrier", 36], [837, 825, "Certoux", 39],
];

function MapCanvas() {
  return (
    <div className="relative h-[869px] w-[1096px] shrink-0 bg-white">
      <svg width="1096" height="869" viewBox="333 194 1096 869" fill="none" className="block">
        <clipPath id="land"><polygon points={coast} /></clipPath>
        <clipPath id="extent"><rect x="562" y="194" width="867" height="869" /></clipPath>
        <g clipPath="url(#extent)" strokeLinejoin="round" strokeLinecap="round">
          <polygon points={coast} fill="#eeeeee" stroke="#d9d9d8" strokeWidth="8.500" />
          <g clipPath="url(#land)">
            {copses.map((p, i) => <polygon key={i} points={p} fill="#e8ebe8" />)}
            {woodland.map((p, i) => <polygon key={i} points={p} fill="#e5e9e5" />)}
            <polygon points={E("262,222 282,235 80,470 30,450 80,370 240,270")} fill="#e2e2dd" />
            <path d="M862 620L920 560M873 612L905 583M890 596L925 556" stroke="#eeeeea" strokeWidth="2" />
            {streams.map((p, i) => <polyline key={i} points={rough(p, 5, 1, false)} stroke="#e0e2e0" strokeWidth="1" />)}
            <polygon points={lake} fill="#ced2d3" />
            {lakeLines.map((p, i) => <g key={i}><polyline points={p} stroke="#bdbdbc" strokeWidth="3" /><polyline points={p} stroke="#dadad9" strokeWidth="1.600" /></g>)}
            {cantonLines.map((p, i) => <g key={i}><polyline points={p} stroke="#dbdbda" strokeWidth="3" /><polyline points={p} stroke="#bcbcbb" strokeWidth="1.200" /></g>)}
            {highways.map((p, i) => <polyline key={i} points={p} stroke="#fff" strokeWidth="3.400" />)}
          </g>
          <polygon points={coast} stroke="#d9d9d8" strokeWidth="8" />
          <polygon points={coast} stroke="#8e8e8e" strokeWidth="1" strokeDasharray="6 4.500" strokeLinecap="butt" />
        </g>
        <g fontFamily="'Liberation Sans', Arial, sans-serif" fontSize="11.300" fill="#4c4c4c" stroke="#f4f4f4" strokeWidth="1.600" strokeOpacity=".8" paintOrder="stroke" textAnchor="middle">
          {places.map(([x, y, t, w]) => <text key={t} x={x} y={y} textLength={w}>{t}</text>)}
          <text x="961.500" y="671.500" fontSize="13.500" textLength="47">Genève</text>
        </g>
        <g strokeLinejoin="round" strokeLinecap="round">
          {forests.map(([p, w], i) => <polyline key={i} points={p} stroke="#2b5518" strokeWidth={w + 0.8} />)}
          {forests.map(([p, w], i) => <polyline key={i} points={p} stroke="#4fe60a" strokeWidth={w * 0.85} strokeOpacity={w < 1.2 ? 0.4 : 1} />)}
        </g>
      </svg>
      <I w={22} h={19} vb="0 0 22 19" className="absolute bottom-[7px] right-[7px]">
        <path d="M.7 3.500h1.800V1.200h8v2.300h10.800v14.500h-2.500v-2.500h-3v2.500h-3v-2.500h-3v2.500h-3v-2.500h-3v2.500H.7z" fill="#fafafa" stroke="#666" strokeWidth="1.300" /><path d="M4 8h14M4 12h14" stroke="#666" strokeWidth="1.300" />
      </I>
    </div>
  );
}

const Bar = ({ className = "" }) => <span className={`h-[15px] w-px bg-[#b5b5b5] ${className}`} />;

function StatusBar() {
  return (
    <div className="flex h-[25px] items-center border-b border-[#43454e] bg-[#333] pt-px text-[12px] tracking-[-0.35px] text-[#c4c4c4]">
      <div className="ml-[5px] flex h-[22px] w-[100px] items-center justify-between border border-[#43454e] bg-[#232323] pl-[5px] pr-[4px]"><span className="tracking-[-0.5px]">1:138'279</span><I w={5} h={4}><path d="M0 0h5L2.500 3.500z" fill="#aaa" /></I></div>
      <Bar className="ml-[3px]" />
      <I w={16} className="ml-[7px]"><path d="M.5.5h10v11H.5zM5.500.5v11M.5 6.500h10" stroke="#999" /><path d="M6 11.500h10M11.500 6v10" stroke="#333" strokeWidth="5" /><path d="M7 11.500h9M11.500 7v9" stroke="#2c87d0" strokeWidth="2" /></I>
      <I w={16} className="ml-[7px]"><path d="M1 1h3v3H1zM10 8h4v4h-4M12 0v6M9 3h6" stroke="#aaa" /><path d="M3 11L9 4M5 13.500h10M9 13l3-4 3 4z" stroke="#2c87d0" strokeWidth="1.300" fill="#2c87d0" /><rect x="0" y="11.500" width="3.500" height="3.500" fill="#45b045" /></I>
      <I w={14} className="ml-[7px]"><path d="M.5.5h13v13H.5zM3.500 0v14M7 0v14M10.500 0v14M0 3.500h14M0 7h14M0 10.500h14" stroke="#aaa" /></I>
      <I w={16} className="ml-[7px]"><rect x="0" y="0" width="8" height="7" fill="#235c24" /><path d="M8 0v16M0 8h16" stroke="#ccc" strokeDasharray="1.500 1.500" /><rect x="6.500" y="6.500" width="3" height="3" stroke="#ccc" /></I>
      <I w={17} className="ml-[6px]"><path d="M1 11V5l5 6V5" stroke="#3fa0e0" strokeWidth="2" /><path d="M8 0v16l8-8" stroke="#999" /><path d="M9 2c4-1 5 2 5 5M11 5l3 3 2-4" stroke="#3fa0e0" strokeWidth="1.500" /></I>
      <Bar className="ml-[6px]" />
      <span className="ml-[247px] w-[158px] whitespace-nowrap tracking-[-0.54px]">2'515'635.47E 1'131'101.18N m</span>
      <I w={9} h={7} className="ml-[11px]"><path d="M.8 1l3.700 4L8.200 1" stroke="#bbb" strokeWidth="1.600" /></I>
      <Bar className="ml-auto" />
      <div className="ml-[4px] flex h-[20px] w-[129px] items-center bg-[#2b2b2b] pl-[3px] text-[#8c8c8c]">
        <I w={16}><path d="M8 1h7v8l-4-2z" fill="#888" /><path d="M7 2h4l-1 4z" fill="#2b79b5" /><circle cx="5.500" cy="8" r="4.500" fill="#22384a" stroke="#2b79b5" /><path d="M3.500 8h4M5.500 6v4" stroke="#888" /><path d="M8.500 11.500l4 4" stroke="#a8602a" strokeWidth="2" /></I>
        <span className="ml-[4px] whitespace-nowrap">Selected Features: 0</span>
      </div>
      <Bar className="ml-[4px]" />
      <I w={11} h={14} className="ml-[8px]"><path d="M2 0v14M9 0v14" stroke="#b0b0b0" strokeWidth="4" /></I>
      <Bar className="ml-[9px]" />
      <I w={17} className="ml-[6px] mr-[5px]"><path d="M2 6c2-5 9-6 12-2M15 11c-2 5-9 6-12 2" stroke="#3fa0e0" strokeWidth="3" /><path d="M16.500 0v7h-7zM.5 17v-7h7z" fill="#3fa0e0" /></I>
    </div>
  );
}

function MapView() {
  return (
    <main className="ml-[6px] mr-[6px] flex w-[1098px] shrink-0 flex-col">
      <div className="ml-px flex h-[21px] shrink-0 items-center text-[12px] tracking-[-0.1px] text-white">
        <div className="flex h-[21px] w-[74px] items-center bg-[#49505f] pl-[5px]"><MapTile /><span className="ml-[5px] w-[31px] pt-[2px]">Map</span><I w={9} className="ml-[2px]"><path d="M.7.7l7.600 7.600M8.300.7L.7 8.300" stroke="#e0e0e0" strokeWidth="1.500" /></I></div>
        <span className="ml-[6px] -mt-[2px]"><Briefcase w={15} h={13} /></span><span className="ml-[6px] pt-[2px] tracking-[-0.25px]">Catalog</span>
        <Caret className="ml-auto mr-[4px] mt-[2px]" c="#a0a0a0" />
      </div>
      <div className="h-[2px] shrink-0 bg-[#43454e]" />
      <div className="shrink-0 border-l border-r border-[#43454e]"><MapCanvas /><StatusBar /></div>
    </main>
  );
}

export default function App() {
  return (
    <div className="flex h-[1094px] w-[1820px] flex-col overflow-hidden bg-[#242424] font-['Open_Sans','Noto_Sans',sans-serif]">
      <div className="h-[14px] shrink-0 bg-white" />
      <Header />
      <Ribbon />
      <div className="flex h-[923px] shrink-0 pt-[6px] pl-[6px]">
        <Contents />
        <MapView />
        <Catalog />
      </div>
    </div>
  );
}
